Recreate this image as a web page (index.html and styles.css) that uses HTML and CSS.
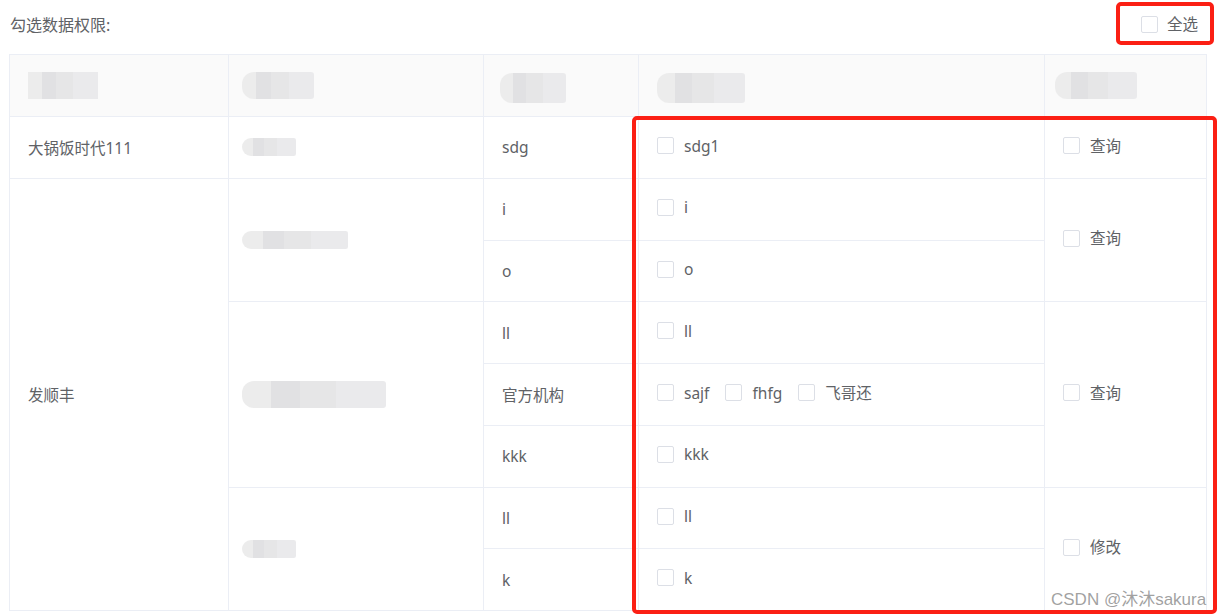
FILE: index.html
```html
<!DOCTYPE html>
<html lang="zh-CN">
<head>
    <meta charset="UTF-8">
    <title>勾选数据权限</title>
    <link rel="stylesheet" href="styles.css">
</head>
<body>
    <div class="page">
        <div class="toolbar">
            <span class="title">勾选数据权限:</span>
            <label class="check-item select-all"><span class="box"></span><span>全选</span></label>
        </div>

        <table class="perm-table">
            <colgroup>
                <col class="c1"><col class="c2"><col class="c3"><col class="c4"><col class="c5">
            </colgroup>
            <thead>
                <tr>
                    <th><span class="blur w70"></span></th>
                    <th><span class="blur w72 round"></span></th>
                    <th><span class="blur w66 tall round shift-2"></span></th>
                    <th><span class="blur w88 tall round shift-0"></span></th>
                    <th><span class="blur w82 round shift-9"></span></th>
                </tr>
            </thead>
            <tbody>
                <tr>
                    <td>大锅饭时代111</td>
                    <td><span class="blur small w54 round"></span></td>
                    <td>sdg</td>
                    <td><label class="check-item"><span class="box"></span><span>sdg1</span></label></td>
                    <td><label class="check-item"><span class="box"></span><span>查询</span></label></td>
                </tr>
                <tr>
                    <td rowspan="7">发顺丰</td>
                    <td rowspan="2"><span class="blur small w106 round"></span></td>
                    <td>i</td>
                    <td><label class="check-item"><span class="box"></span><span>i</span></label></td>
                    <td rowspan="2"><label class="check-item"><span class="box"></span><span>查询</span></label></td>
                </tr>
                <tr>
                    <td>o</td>
                    <td><label class="check-item"><span class="box"></span><span>o</span></label></td>
                </tr>
                <tr>
                    <td rowspan="3"><span class="blur w144 round"></span></td>
                    <td>ll</td>
                    <td><label class="check-item"><span class="box"></span><span>ll</span></label></td>
                    <td rowspan="3"><label class="check-item"><span class="box"></span><span>查询</span></label></td>
                </tr>
                <tr>
                    <td>官方机构</td>
                    <td>
                        <label class="check-item"><span class="box"></span><span>sajf</span></label>
                        <label class="check-item"><span class="box"></span><span>fhfg</span></label>
                        <label class="check-item"><span class="box"></span><span>飞哥还</span></label>
                    </td>
                </tr>
                <tr>
                    <td>kkk</td>
                    <td><label class="check-item"><span class="box"></span><span>kkk</span></label></td>
                </tr>
                <tr>
                    <td rowspan="2"><span class="blur small w54 round"></span></td>
                    <td>ll</td>
                    <td><label class="check-item"><span class="box"></span><span>ll</span></label></td>
                    <td rowspan="2"><label class="check-item"><span class="box"></span><span>修改</span></label></td>
                </tr>
                <tr>
                    <td>k</td>
                    <td><label class="check-item"><span class="box"></span><span>k</span></label></td>
                </tr>
            </tbody>
        </table>

        <!-- annotation marks over the screenshot -->
        <div class="mark mark-all"></div>
        <div class="mark mark-cols"></div>
        <div class="watermark">CSDN @沐沐sakura</div>
    </div>
</body>
</html>
```

FILE: styles.css
```css
* {
    margin: 0;
    padding: 0;
    box-sizing: border-box;
}

body {
    background: #fff;
    font-family: "Noto Sans", "Noto Sans CJK SC", sans-serif;
    font-size: 15.5px;
    color: #606266;
}

.page {
    position: relative;
    width: 1220px;
    height: 616px;
    padding: 0 14px 0 9px;
}

.toolbar {
    height: 54px;
    display: flex;
    align-items: center;
    justify-content: space-between;
    padding: 0 8px 6px 1px;
}

.title {
    font-size: 16px;
    color: #606266;
}

.check-item {
    display: inline-flex;
    align-items: center;
    gap: 10px;
    margin-right: 12px;
    line-height: 20px;
    white-space: nowrap;
}

.check-item:last-child {
    margin-right: 0;
}

.check-item .box {
    width: 17px;
    height: 17px;
    border: 1px solid #dcdfe6;
    border-radius: 2px;
    background: #fff;
}

.select-all {
    gap: 9px;
}

.perm-table {
    width: 1197px;
    border-collapse: collapse;
    table-layout: fixed;
    border: 1px solid #ebeef5;
}

.c1 { width: 219px; }
.c2 { width: 255px; }
.c3 { width: 155px; }
.c4 { width: 406px; }
.c5 { width: 162px; }

.perm-table th,
.perm-table td {
    border: 1px solid #ebeef5;
    padding: 0 18px;
    text-align: left;
    vertical-align: middle;
    font-weight: normal;
}

.perm-table th {
    height: 62px;
    background: #fafafa;
}

.perm-table td {
    height: 61.75px;
}

.blur {
    display: block;
    height: 27px;
    background: linear-gradient(90deg, #ececec 0 20%, #e1e1e3 20% 40%, #e6e6e7 40% 65%, #eaeaec 65% 100%);
    filter: blur(0.6px);
}

.blur.small {
    height: 18px;
}

.blur.tall {
    height: 30px;
    margin-top: 4px;
}

.blur.round {
    border-radius: 12px 3px 3px 12px;
    margin-left: -5px;
}

.blur.round.shift-2 { margin-left: -2px; }
.blur.round.shift-0 { margin-left: 0; }
.blur.round.shift-9 { margin-left: -8px; }

.w54 { width: 54px; }
.w66 { width: 66px; }
.w70 { width: 70px; }
.w72 { width: 72px; }
.w82 { width: 82px; }
.w88 { width: 88px; }
.w106 { width: 106px; }
.w144 { width: 144px; }

.mark {
    position: absolute;
    border: 4px solid #fb1f14;
    border-radius: 5px;
    pointer-events: none;
}

.mark-all {
    left: 1116px;
    top: 2px;
    width: 98px;
    height: 43px;
}

.mark-cols {
    left: 632px;
    top: 116px;
    width: 585px;
    height: 498px;
}

.watermark {
    position: absolute;
    left: 1051px;
    top: 585px;
    font-family: "Liberation Sans", "Noto Sans CJK SC", sans-serif;
    font-size: 17px;
    color: rgba(130, 130, 130, 0.75);
    white-space: nowrap;
}
```
